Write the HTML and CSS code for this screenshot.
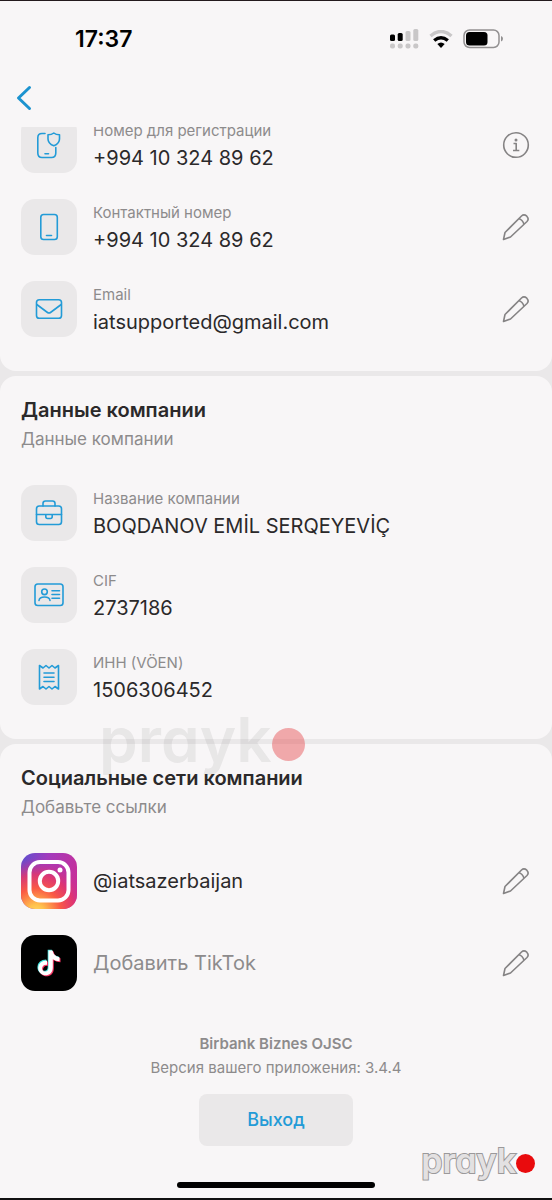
FILE: index.html
```html
<!DOCTYPE html>
<html lang="ru">
<head>
<meta charset="utf-8">
<meta name="viewport" content="width=device-width, initial-scale=1">
<title>Birbank Biznes</title>
<link rel="stylesheet" href="styles.css">
</head>
<body>
<svg class="defs" aria-hidden="true">
  <symbol id="pencil" viewBox="0 0 28 28">
    <path d="M1.500 26.500 L3 19.500 L19.500 3 Q22 .8 24.800 3.200 Q27.400 6 25 8.500 L8.500 24 Z M16.800 5.800 Q20.500 6.500 22 11.300"/>
  </symbol>
</svg>
<div class="screen">
  <header class="top">
    <div class="status">
      <span class="time">17:37</span>
      <div class="indicators">
        <svg class="signal" viewBox="0 0 29 20" aria-label="Сигнал">
          <g fill="#000"><rect x="0" y="5.500" width="5" height="6.500" rx="1.500"/><rect x="7.700" y="4" width="5" height="8" rx="1.500"/></g>
          <g fill="#c9c7c8"><rect x="15.500" y="2" width="5" height="10" rx="1.500"/><rect x="23.300" y="0" width="5" height="12" rx="1.500"/><rect x="0" y="14.500" width="5" height="5" rx="2"/><rect x="7.700" y="14.500" width="5" height="5" rx="2"/><rect x="15.500" y="14.500" width="5" height="5" rx="2"/><rect x="23.300" y="14.500" width="5" height="5" rx="2"/></g>
        </svg>
        <svg class="wifi" viewBox="0 0 24 18" aria-label="Wi-Fi">
          <path d="M1.500 6 Q12 -3 22.500 6" stroke="#c9c7c8" stroke-width="3.400" fill="none"/>
          <path d="M5.200 10.500 Q12 4.800 18.800 10.500" stroke="#000" stroke-width="3.400" fill="none"/>
          <path d="M8.300 14 Q12 11 15.700 14 L12 18 Z" fill="#000"/>
        </svg>
        <svg class="battery" viewBox="0 0 41 20" aria-label="Батарея">
          <rect x="1" y="1" width="35" height="17.500" rx="5.500" fill="none" stroke="#929091" stroke-width="1.500"/>
          <rect x="3" y="3" width="21.500" height="13.500" rx="3.500" fill="#000"/>
          <path d="M38 7 Q40 7.500 40 9.700 Q40 12 38 12.500 Z" fill="#929091"/>
        </svg>
      </div>
    </div>
    <button class="back" aria-label="Назад"><svg viewBox="0 0 16 26"><path d="M13.500 2.500 L2.500 13 L13.500 23.500"/></svg></button>
  </header>

  <main class="content">
    <section class="card card-contacts">
      <div class="row">
        <span class="tile"><svg viewBox="0 0 28 28"><path d="M10 2.500 H7 Q2.800 2.500 2.800 6.700 V22 Q2.800 26.500 7 26.500 H16.500 Q20.800 26.500 20.800 22 V16.500 M10 22.800 H13.500 M18.800 2 Q21 3.800 24.500 3.800 V8 Q24.500 12.500 18.800 14.800 Q13 12.500 13 8 V3.800 Q16.600 3.800 18.800 2 Z"/></svg></span>
        <div class="text"><span class="label">Номер для регистрации</span><span class="value">+994 10 324 89 62</span></div>
        <button class="action" aria-label="Информация"><svg viewBox="0 0 28 28"><circle cx="14" cy="14" r="12.300"/><path d="M11.500 12.500 H14.200 V19.300 M11 19.500 H17.300"/><circle class="dot" cx="14" cy="9" r="1.500"/></svg></button>
      </div>
      <div class="row">
        <span class="tile"><svg viewBox="0 0 28 28"><rect x="5.800" y="1.500" width="16.500" height="25" rx="2.800"/><path d="M11.500 22.500 H16.500"/></svg></span>
        <div class="text"><span class="label">Контактный номер</span><span class="value">+994 10 324 89 62</span></div>
        <button class="action" aria-label="Изменить номер"><svg><use href="#pencil"/></svg></button>
      </div>
      <div class="row">
        <span class="tile"><svg viewBox="0 0 28 28"><rect x="1.500" y="4.800" width="25" height="18.400" rx="2.800"/><path d="M1.800 9.500 L12.500 17.500 Q14 18.600 15.500 17.500 L26.200 9.500"/></svg></span>
        <div class="text"><span class="label">Email</span><span class="value">iatsupported@gmail.com</span></div>
        <button class="action" aria-label="Изменить email"><svg><use href="#pencil"/></svg></button>
      </div>
    </section>

    <section class="card">
      <h2 class="title">Данные компании</h2>
      <p class="subtitle">Данные компании</p>
      <div class="row">
        <span class="tile"><svg viewBox="0 0 28 28"><rect x="1.500" y="7" width="25" height="18.500" rx="2.800"/><path d="M8 7 V4.500 Q8 2 10.500 2 H17.500 Q20 2 20 4.500 V7 M1.500 15.500 H26.500 M10.800 15.500 V17.500 Q10.800 19.500 12.500 19.500 H15.500 Q17.200 19.500 17.200 17.500 V15.500"/></svg></span>
        <div class="text"><span class="label">Название компании</span><span class="value">BOQDANOV EMİL SERQEYEVİÇ</span></div>
      </div>
      <div class="row">
        <span class="tile"><svg class="wide" viewBox="0 0 30 28"><rect x="1" y="3" width="28" height="21.500" rx="2.800"/><circle cx="10.500" cy="10.800" r="2.800"/><path d="M5 19.500 Q5.500 16 10.500 16 Q15.500 16 16 19.500 M18 9.800 H25.500 M18 13.500 H25.500 M18 17.200 H25.500"/></svg></span>
        <div class="text"><span class="label">CIF</span><span class="value">2737186</span></div>
      </div>
      <div class="row">
        <span class="tile"><svg viewBox="0 0 28 28"><path d="M4.500 2.500 V26 L8 23.500 L11 26 L14 23.500 L17 26 L20 23.500 L23.500 26 V2.500 L20 5 L17 2.500 L14 5 L11 2.500 L8 5 Z M9 10 H19 M9 14.200 H19 M9 18.500 H19"/></svg></span>
        <div class="text"><span class="label">ИНН (VÖEN)</span><span class="value">1506306452</span></div>
      </div>
    </section>

    <section class="card card-social">
      <h2 class="title">Социальные сети компании</h2>
      <p class="subtitle">Добавьте ссылки</p>
      <div class="row">
        <svg class="logo" viewBox="0 0 56 56" aria-label="Instagram">
          <defs>
            <linearGradient id="ig-base" x1="0" y1="0" x2="1" y2=".35"><stop offset="0" stop-color="#5b50cf"/><stop offset=".45" stop-color="#a23bbd"/><stop offset="1" stop-color="#c52f9b"/></linearGradient>
            <radialGradient id="ig-warm" cx=".27" cy="1.070" r=".98"><stop offset="0" stop-color="#ffd966"/><stop offset=".15" stop-color="#ffc24d"/><stop offset=".45" stop-color="#fa5a45"/><stop offset=".7" stop-color="#e53768" stop-opacity=".85"/><stop offset="1" stop-color="#c52f9b" stop-opacity="0"/></radialGradient>
          </defs>
          <rect width="56" height="56" rx="14" fill="url(#ig-base)"/><rect width="56" height="56" rx="14" fill="url(#ig-warm)"/>
          <rect x="8.500" y="9" width="39" height="38.500" rx="10.500" fill="none" stroke="#fff" stroke-width="4"/>
          <circle cx="28" cy="28" r="9.200" fill="none" stroke="#fff" stroke-width="4"/><circle cx="39" cy="17" r="2.500" fill="#fff"/>
        </svg>
        <div class="text"><span class="value">@iatsazerbaijan</span></div>
        <button class="action" aria-label="Изменить Instagram"><svg><use href="#pencil"/></svg></button>
      </div>
      <div class="row">
        <svg class="logo" viewBox="0 0 56 56" aria-label="TikTok">
          <defs><path id="note" d="M27.500 15.500 H31.600 Q32.500 21.500 38.500 22.300 V26.300 Q34.600 26.200 31.800 24.200 V32.500 C31.800 43.300 17.200 42.500 17.200 32.800 Q18 25.500 26 25.400 V29.700 C20 29 19.500 36.600 24.500 36.600 Q27.500 36.400 27.500 32.800 Z"/></defs>
          <rect width="56" height="56" rx="14" fill="#000"/>
          <use href="#note" x="-.8" y="-.8" fill="#46e5e0"/><use href="#note" x="1" y="1" fill="#f83564"/><use href="#note" fill="#fff"/>
        </svg>
        <div class="text"><span class="value muted">Добавить TikTok</span></div>
        <button class="action" aria-label="Добавить TikTok"><svg><use href="#pencil"/></svg></button>
      </div>
      <div class="mark mark-large" aria-hidden="true"><span>prayk</span><i></i></div>
    </section>
  </main>

  <footer class="footer">
    <p class="company">Birbank Biznes OJSC</p>
    <p class="version">Версия вашего приложения: 3.4.4</p>
    <button class="exit">Выход</button>
    <div class="home"></div>
    <div class="mark mark-small" aria-hidden="true"><span>prayk</span><i></i></div>
  </footer>
</div>
</body>
</html>
```
FILE: styles.css
```css
* { box-sizing: border-box; }
body { margin: 0; background: #f8f6f7; color: #2b292a; font-family: Inter, "Noto Sans", sans-serif; }
h2, p { margin: 0; }
button { border: 0; padding: 0; background: none; font: inherit; cursor: pointer; }
svg { display: block; flex: none; }
.defs { position: absolute; width: 0; height: 0; }
.screen { display: flex; flex-direction: column; min-height: 100vh; border-top: 1px solid #231a1d; border-bottom: 2px solid #111; }

.top { height: 126px; padding-top: 24px; }
.status { display: flex; justify-content: space-between; align-items: center; height: 28px; padding: 0 48px 0 75px; }
.time { font-size: 23px; font-weight: 600; color: #000; }
.indicators { display: flex; align-items: center; gap: 10px; }
.signal { width: 29px; height: 20px; }
.wifi { width: 24px; height: 18px; }
.battery { width: 41px; height: 20px; }
.back { display: block; margin: 32px 0 0 16px; }
.back svg { width: 16px; height: 26px; fill: none; stroke: #1c93cf; stroke-width: 3; stroke-linecap: round; stroke-linejoin: round; }

.content { display: flex; flex-direction: column; gap: 5px; overflow: hidden; background: #eae8e9; }
.card { display: flex; flex-direction: column; padding: 20px 20px 34px 21px; border-radius: 16px; background: #f8f6f7; }
.card-contacts { margin-top: -10px; padding-top: 0; border-top-left-radius: 0; border-top-right-radius: 0; }
.card-social { position: relative; padding-bottom: 41px; border-radius: 16px 16px 0 0; }
.title { font-size: 20px; line-height: 28px; font-weight: 600; }
.subtitle { margin: 2px 0 33px; font-size: 17px; line-height: 26px; color: #8d8b8c; }
.row { display: flex; align-items: center; gap: 16px; }
.row + .row { margin-top: 26px; }
.tile { display: grid; place-items: center; width: 56px; height: 56px; border-radius: 14px; background: #eae8e9; }
.tile svg { width: 28px; height: 28px; fill: none; stroke: #239bd7; stroke-width: 1.600; stroke-linecap: round; stroke-linejoin: round; }
.tile .wide { width: 30px; }
.logo { width: 56px; height: 56px; }
.text { display: flex; flex: 1; flex-direction: column; min-width: 0; }
.label { font-size: 15px; line-height: 26px; color: #8d8b8c; }
.value { font-size: 20px; line-height: 28px; }
.muted { color: #8d8b8c; }
.action { margin-right: 2px; }
.action svg { width: 28px; height: 28px; fill: none; stroke: #858384; stroke-width: 1.600; stroke-linejoin: round; }
.action .dot { fill: #858384; stroke: none; }

.footer { position: relative; display: flex; flex: 1; flex-direction: column; align-items: center; color: #8d8b8c; font-size: 15px; line-height: 24px; }
.company { font-weight: 600; }
.exit { width: 154px; height: 52px; margin-top: 14px; border-radius: 8px; background: #eae8e9; color: #239bd7; font-size: 18px; font-weight: 500; }
.home { width: 198px; height: 6px; margin: auto 0 10px; border-radius: 3px; background: #000; }

.mark { position: absolute; display: flex; align-items: center; font-weight: 600; line-height: 1; font-feature-settings: "cv11"; pointer-events: none; }
.mark i { border-radius: 50%; }
.mark-large { top: -35px; left: 99px; font-size: 62px; color: rgba(100, 96, 98, .1); }
.mark-large i { width: 33px; height: 33px; margin-top: 8px; background: rgba(228, 60, 65, .42); }
.mark-small { right: 17px; bottom: 20px; font-size: 34px; color: #e3e1e2; -webkit-text-stroke: 2px #9b999a; paint-order: stroke fill; }
.mark-small i { width: 19px; height: 19px; margin-top: 4px; background: #e90b0d; }
```
